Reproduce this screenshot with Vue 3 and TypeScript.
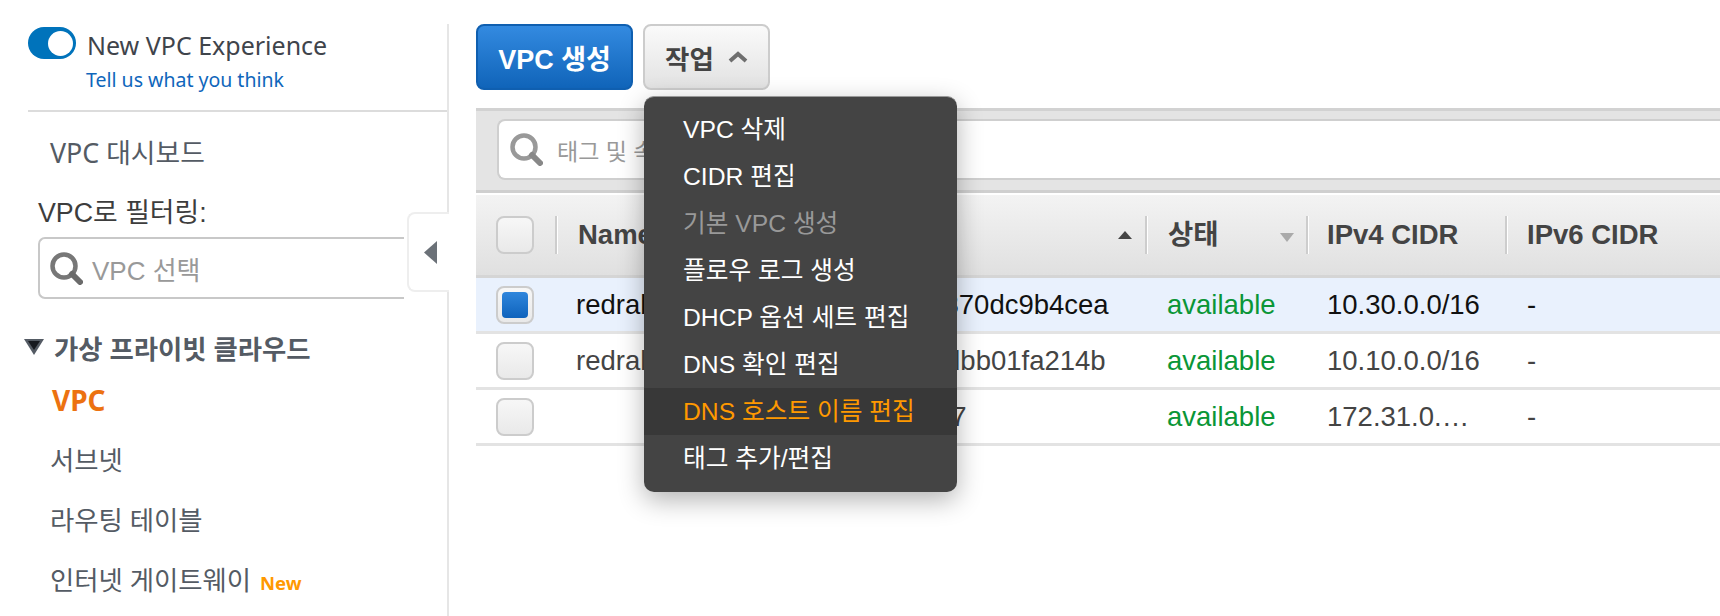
<template>
  <div class="page">
    <aside class="sidebar">
      <div class="experience">
        <div class="switch-row">
          <span class="switch"><span class="knob"></span></span>
          <span class="switch-label">New VPC Experience</span>
        </div>
        <a class="feedback">Tell us what you think</a>
      </div>
      <a class="nav-link dash">VPC 대시보드</a>
      <label class="filter-label">VPC로 필터링:</label>
      <div class="filter-box">
        <svg class="lens" viewBox="0 0 33 33"><circle cx="14" cy="14" r="11.500" fill="none" stroke="#777" stroke-width="4.500"/><path d="M22 22l8 8" stroke="#6b6b6b" stroke-width="6" stroke-linecap="round"/></svg>
        <span class="placeholder">VPC 선택</span>
      </div>
      <div class="section-title">
        <svg class="caret" viewBox="0 0 20 16"><path d="M0 0h20L10 16z" fill="#545b64"/><path d="M4 2h12l-6 9z" fill="#16191f"/></svg>
        가상 프라이빗 클라우드
      </div>
      <a class="nav-link current">VPC</a>
      <a class="nav-link">서브넷</a>
      <a class="nav-link">라우팅 테이블</a>
      <a class="nav-link">인터넷 게이트웨이 <span class="new">New</span></a>
      <div class="collapse-tab"><svg viewBox="0 0 13 23" width="13" height="23"><path d="M13 0v23L0 11.500z" fill="#6b7178"/></svg></div>
    </aside>

    <main class="content">
      <div class="toolbar">
        <button class="btn primary">VPC 생성</button>
        <button class="btn">작업
          <svg class="chevron" viewBox="0 0 20 12" width="20" height="12"><path d="M2 10l8-7 8 7" fill="none" stroke="#6e6e6e" stroke-width="4"/></svg>
        </button>
      </div>

      <div class="search-bar">
        <div class="search-box">
          <svg class="lens" viewBox="0 0 33 33"><circle cx="14" cy="14" r="11.500" fill="none" stroke="#999" stroke-width="4.500"/><path d="M22 22l8 8" stroke="#888" stroke-width="6" stroke-linecap="round"/></svg>
          <span class="search-text">태그 및 속성별 필터링 또는 키워드별 검색</span>
        </div>
      </div>

      <div class="table">
        <div class="head">
          <div class="cell check"><span class="box"></span></div>
          <div class="cell name">Name</div>
          <div class="cell vpc-id">VPC ID<i class="tri up"></i></div>
          <div class="cell state">상태<i class="tri down"></i></div>
          <div class="cell ipv4">IPv4 CIDR</div>
          <div class="cell ipv6">IPv6 CIDR</div>
        </div>
        <div v-for="row in rows" :key="row.id" class="row" :class="{ selected: row.selected }">
          <div class="cell check"><span class="box"><span v-if="row.selected" class="tick"></span></span></div>
          <div class="cell name">{{ row.name }}</div>
          <div class="cell vpc-id">{{ row.id }}</div>
          <div class="cell state ok">available</div>
          <div class="cell ipv4">{{ row.cidr }}</div>
          <div class="cell ipv6">-</div>
        </div>
      </div>

      <ul class="menu">
        <li v-for="item in menuItems" :key="item.label" :class="{ off: item.off, hover: item.hover }">{{ item.label }}</li>
      </ul>
    </main>
  </div>
</template>

<script setup lang="ts">
interface Row {
  name: string
  id: string
  cidr: string
  selected?: boolean
}

const rows: Row[] = [
  { name: 'redrabbit-vpc', id: 'vpc-0c1f2a370dc9b4cea', cidr: '10.30.0.0/16', selected: true },
  { name: 'redrabbit-dev', id: 'vpc-0e41f7dbb01fa214b', cidr: '10.10.0.0/16' },
  { name: '', id: 'vpc-f1a2c3f7', cidr: '172.31.0.…' }
]

const menuItems = [
  { label: 'VPC 삭제' },
  { label: 'CIDR 편집' },
  { label: '기본 VPC 생성', off: true },
  { label: '플로우 로그 생성' },
  { label: 'DHCP 옵션 세트 편집' },
  { label: 'DNS 확인 편집' },
  { label: 'DNS 호스트 이름 편집', hover: true },
  { label: '태그 추가/편집' }
]
</script>

<style>
html, body {
  margin: 0;
  background: #fff;
  overflow: hidden;
}
</style>

<style scoped>
.page {
  display: flex;
  width: 1720px;
  height: 616px;
  overflow: hidden;
  font-family: "Liberation Sans", "Noto Sans CJK KR", sans-serif;
  color: #444;
}

.sidebar {
  position: relative;
  box-sizing: border-box;
  width: 449px;
  height: 616px;
  margin-top: 24px;
  padding-left: 28px;
  border-right: 2px solid #e6e6e6;
  font-family: "Noto Sans", "Noto Sans CJK KR", sans-serif;
  flex: none;
}

.experience {
  box-sizing: border-box;
  height: 88px;
  padding-top: 3px;
  border-bottom: 2px solid #dcdcdc;
}

.switch-row {
  display: flex;
  align-items: center;
  gap: 11px;
  height: 32px;
}

.switch {
  display: block;
  box-sizing: border-box;
  width: 48px;
  height: 32px;
  border-radius: 16px;
  background: #0073bb;
  padding: 4px 3px 3px 20px;
}

.knob {
  display: block;
  width: 25px;
  height: 25px;
  border-radius: 50%;
  background: #fff;
}

.switch-label {
  padding-top: 4px;
  font-size: 25px;
  color: #3f444b;
}

.feedback {
  display: block;
  margin: 7px 0 0 58px;
  font-size: 19.500px;
  line-height: 28px;
  color: #0f66bb;
}

.nav-link {
  display: block;
  margin-left: 22px;
  height: 60px;
  line-height: 60px;
  font-size: 26.400px;
  color: #545b64;
  white-space: nowrap;
}

.dash {
  margin-top: 14px;
  height: 54px;
  line-height: 54px;
  font-size: 26.800px;
}

.filter-label {
  display: block;
  margin: 15px 0 0 10px;
  font-family: "Liberation Sans", "Noto Sans CJK KR", sans-serif;
  font-size: 26.800px;
  line-height: 36px;
  color: #3d3d3d;
}

.filter-box {
  display: flex;
  align-items: center;
  box-sizing: border-box;
  width: 366px;
  height: 62px;
  margin: 6px 0 0 10px;
  padding-left: 10px;
  border: 2px solid #c8c8c8;
  border-right: 0;
  border-radius: 7px 0 0 7px;
}

.lens {
  width: 33px;
  height: 33px;
  flex: none;
  filter: blur(0.6px);
}

.placeholder {
  margin-left: 9px;
  font-family: "Liberation Sans", "Noto Sans CJK KR", sans-serif;
  font-size: 26px;
  color: #999;
}

.section-title {
  display: flex;
  align-items: center;
  margin: 18px 0 0 -4px;
  height: 60px;
  font-size: 26.400px;
  font-weight: 700;
  color: #545b64;
}

.caret {
  width: 20px;
  height: 16px;
  margin-right: 10px;
}

.current {
  height: 46px;
  line-height: 46px;
  font-size: 28px;
  font-weight: 700;
  color: #ec7211;
  margin-left: 24px;
}

.current + .nav-link {
  margin-top: 7px;
}

.new {
  margin-left: 2px;
  font-size: 18.500px;
  font-weight: 700;
  color: #ff9900;
}

.collapse-tab {
  position: absolute;
  top: 188px;
  right: -2px;
  display: flex;
  align-items: center;
  box-sizing: border-box;
  width: 42px;
  height: 80px;
  padding-left: 15px;
  background: #fff;
  border: 2px solid #eee;
  border-right: 0;
  border-radius: 8px 0 0 8px;
}

.content {
  position: relative;
  flex: 1;
  padding: 24px 0 0 27px;
  min-width: 0;
}

.toolbar {
  display: flex;
  gap: 10px;
  height: 66px;
}

.btn {
  display: flex;
  align-items: center;
  justify-content: center;
  gap: 14px;
  box-sizing: border-box;
  width: 127px;
  height: 66px;
  padding: 0;
  border: 2px solid #ccc;
  border-radius: 8px;
  background: linear-gradient(#fafafa, #e2e2e2);
  font-family: "Liberation Sans", "Noto Sans CJK KR", sans-serif;
  font-size: 26.500px;
  font-weight: 700;
  color: #444;
}

.primary {
  width: 157px;
  border-color: #0f5fb0;
  background: linear-gradient(#338ae0, #1064b9);
  color: #fff;
  font-size: 27px;
}

.search-bar {
  box-sizing: border-box;
  height: 85px;
  margin-top: 18px;
  padding: 8px 0 12px 21px;
  background: #e4e4e4;
  border-top: 3px solid #d2d2d2;
  border-bottom: 3px solid #cfcfcf;
}

.search-box {
  display: flex;
  align-items: center;
  box-sizing: border-box;
  height: 61px;
  padding-left: 11px;
  background: #fff;
  border: 2px solid #cfcfcf;
  border-right: 0;
  border-radius: 8px 0 0 8px;
}

.search-text {
  margin-left: 14px;
  font-size: 23px;
  color: #999;
  white-space: nowrap;
}

.head,
.row {
  display: flex;
  align-items: center;
}

.head {
  height: 85px;
  border-top: 2px solid #fff;
  border-bottom: 3px solid #d5d5d5;
  background: linear-gradient(#f3f3f3, #e0e0e0);
  font-size: 27.500px;
  font-weight: 700;
  color: #444;
  box-sizing: border-box;
}

.row {
  height: 56px;
  box-sizing: border-box;
  border-bottom: 3px solid #e3e3e3;
  font-size: 27.500px;
  color: #444;
}

.selected {
  background: #e9f1fd;
  color: #111;
}

.cell {
  position: relative;
  box-sizing: border-box;
  white-space: nowrap;
  overflow: hidden;
  flex: none;
}

.check {
  width: 79px;
  padding-left: 20px;
  display: flex;
}

.box {
  display: flex;
  align-items: center;
  justify-content: center;
  box-sizing: border-box;
  width: 38px;
  height: 38px;
  border: 2px solid #ccc;
  border-radius: 8px;
  background: linear-gradient(#f7f7f7, #e9e9e9);
}

.tick {
  width: 26px;
  height: 26px;
  border-radius: 4px;
  background: linear-gradient(#2f86dc, #0f63bc);
}

.name {
  width: 234px;
  padding-left: 21px;
}

.vpc-id {
  width: 356px;
  padding-left: 20px;
}

.state {
  width: 161px;
  padding-left: 22px;
}

.ipv4 {
  width: 199px;
  padding-left: 21px;
}

.ipv6 {
  width: 200px;
  padding-left: 22px;
}

.head .cell {
  height: 38px;
  line-height: 38px;
}

.head .name,
.head .vpc-id,
.head .state,
.head .ipv4,
.head .ipv6 {
  padding-left: 21px;
  border-left: 2px solid #cdcdcd;
  box-shadow: inset 1px 0 0 #fff;
}

.head .ipv4 {
  padding-left: 19px;
}

.head .ipv6 {
  padding-left: 20px;
}

.ok {
  color: #0a9637;
}

.tri {
  position: absolute;
  right: 12px;
  top: 15px;
  width: 0;
  height: 0;
  border-left: 7px solid transparent;
  border-right: 7px solid transparent;
}

.tri.up {
  border-bottom: 8px solid #444;
  right: 13px;
}

.tri.down {
  border-top: 9px solid #aaa;
  top: 17px;
}

.menu {
  position: absolute;
  top: 96px;
  left: 195px;
  box-sizing: border-box;
  width: 313px;
  height: 396px;
  margin: 0;
  padding: 9px 0 0;
  list-style: none;
  background: #444;
  border-top: 1px solid #999;
  border-radius: 10px;
  box-shadow: 0 8px 26px rgba(0, 0, 0, 0.3);
  font-size: 24.700px;
  color: #fff;
}

.menu li {
  height: 47px;
  line-height: 47px;
  padding-left: 39px;
  white-space: nowrap;
}

.off {
  color: #999;
}

.hover {
  background: #383838;
  color: #ff9900;
}
</style>
